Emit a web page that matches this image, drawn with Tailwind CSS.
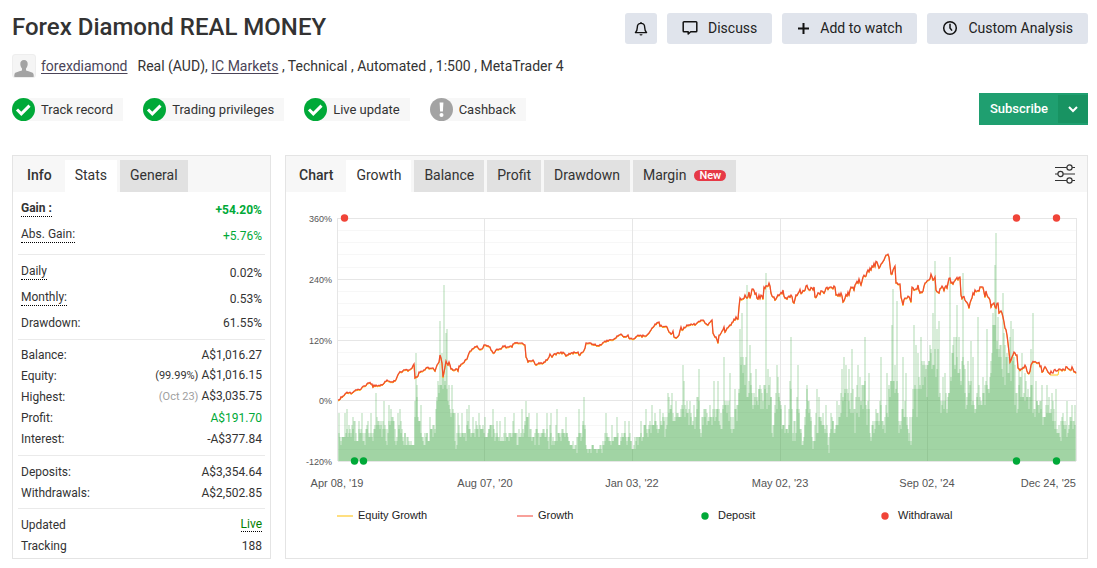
<!DOCTYPE html>
<html lang="en">
<head>
  <meta charset="UTF-8">
  <meta name="viewport" content="width=device-width, initial-scale=1">
  <title>Forex Diamond REAL MONEY</title>
  <script src="https://cdn.jsdelivr.net/npm/@tailwindcss/browser@4"></script>
</head>
<body class="bg-white font-[Roboto,sans-serif] text-[#333]">
  <main class="pl-3 pr-[9px] pt-3">

    <!-- Title and actions -->
    <div class="flex items-start justify-between">
      <h1 class="text-2xl leading-[30px] font-medium">Forex Diamond REAL MONEY</h1>
      <div class="flex gap-[10px] pt-px text-sm text-[#222]">
        <button aria-label="Notifications" class="flex h-[31px] w-8 items-center justify-center rounded-[3px] bg-[#e0e4ec]">
          <svg class="h-4 w-4" viewBox="0 0 16 16" fill="none" stroke="#111" stroke-width="1.4" stroke-linejoin="round"><path d="M8 2.4c-2.4 0-3.7 1.8-3.7 4 0 3-.8 4-1.9 5.200h11.200c-1.100-1.200-1.900-2.200-1.900-5.200 0-2.200-1.300-4-3.700-4zM8 1v1.400"/><path d="M6.500 13.200h3a1.500 1.300 0 0 1-3 0z" fill="#111" stroke="none"/></svg>
        </button>
        <button class="flex h-[31px] items-center gap-[10px] rounded-[3px] bg-[#e0e4ec] px-[15px] pb-px">
          <svg class="h-4 w-4" viewBox="0 0 16 16" fill="none" stroke="#111" stroke-width="1.500" stroke-linejoin="round"><path d="M2 1.700h12a.8.8 0 0 1 .8.8v8.400a.8.8 0 0 1-.8.8H8.700L6.200 14v-2.300H2a.8.8 0 0 1-.8-.8V2.500a.8.8 0 0 1 .8-.8z"/></svg>
          Discuss
        </button>
        <button class="flex h-[31px] items-center gap-[10px] rounded-[3px] bg-[#e0e4ec] px-[15px] pb-px">
          <svg class="h-[13px] w-[13px]" viewBox="0 0 13 13" stroke="#111" stroke-width="2"><path d="M6.500 1v11M1 6.500h11"/></svg>
          Add to watch
        </button>
        <button class="flex h-[31px] items-center gap-[10px] rounded-[3px] bg-[#e0e4ec] px-[15px] pb-px">
          <svg class="h-4 w-4" viewBox="0 0 16 16" fill="none" stroke="#111" stroke-width="1.500"><circle cx="8" cy="8" r="6.300"/><path d="M8 3.800V8l2 2.600"/></svg>
          Custom Analysis
        </button>
      </div>
    </div>

    <!-- Account line -->
    <div class="mt-[10px] flex items-center text-sm leading-6">
      <svg class="h-6 w-6 rounded-[3px] border border-[#eee] bg-[#f5f5f5]" viewBox="0 0 22 22"><path fill="#a3a3a3" d="M11 5c2.500 0 3.900 1.700 3.700 4.300-.1 1.900-.9 3.300-1.700 4.100v1.900c1 1.200 7 1.500 7.500 3.700.2.800.3 2 .3 3H1.200c0-1 .1-2.200.3-3 .5-2.200 6.500-2.500 7.500-3.700v-1.900c-.8-.8-1.600-2.200-1.700-4.100C7.100 6.700 8.500 5 11 5z"/></svg>
      <a href="#" class="ml-[5px] text-[#4a4458] underline underline-offset-2">forexdiamond</a>
      <p class="ml-[10px]">Real (AUD), <a href="#" class="text-[#4a4458] underline underline-offset-2">IC Markets</a> , Technical , Automated , 1:500 , MetaTrader 4</p>
    </div>

    <!-- Verification badges -->
    <div class="mt-[15px] flex items-center justify-between">
      <ul class="flex gap-5 text-[13px] leading-[23px]">
        <li class="flex items-center gap-[6px] rounded-l-full bg-[#f7f7f7] pr-[10px]"><svg class="h-[23px] w-[23px]" viewBox="0 0 23 23"><circle cx="11.500" cy="11.500" r="11.500" fill="#00a938"/><path d="M5 11.500l4.300 4.300L17.500 7.600" fill="none" stroke="#fff" stroke-width="3"/></svg>Track record</li>
        <li class="flex items-center gap-[6px] rounded-l-full bg-[#f7f7f7] pr-[10px]"><svg class="h-[23px] w-[23px]" viewBox="0 0 23 23"><circle cx="11.500" cy="11.500" r="11.500" fill="#00a938"/><path d="M5 11.500l4.300 4.300L17.500 7.600" fill="none" stroke="#fff" stroke-width="3"/></svg>Trading privileges</li>
        <li class="flex items-center gap-[6px] rounded-l-full bg-[#f7f7f7] pr-[10px]"><svg class="h-[23px] w-[23px]" viewBox="0 0 23 23"><circle cx="11.500" cy="11.500" r="11.500" fill="#00a938"/><path d="M5 11.500l4.300 4.300L17.500 7.600" fill="none" stroke="#fff" stroke-width="3"/></svg>Live update</li>
        <li class="flex items-center gap-[6px] rounded-l-full bg-[#f7f7f7] pr-[10px]"><svg class="h-[23px] w-[23px]" viewBox="0 0 23 23"><circle cx="11.500" cy="11.500" r="11.500" fill="#a3a3a3"/><path d="M9.600 4.500h3.800l-.5 9h-2.800z" fill="#fff"/><circle cx="11.500" cy="17" r="2" fill="#fff"/></svg>Cashback</li>
      </ul>
      <div class="flex h-8 bg-[#1f9f70] text-white">
        <button class="pl-[11px] pr-[10px] text-[13px] font-medium">Subscribe</button>
        <button aria-label="More subscribe options" class="my-[2px] flex w-[30px] items-center justify-center bg-[#189362]">
          <svg class="h-[10px] w-[10px]" viewBox="0 0 10 10" fill="none" stroke="#fff" stroke-width="2"><path d="M1 3l4 4 4-4"/></svg>
        </button>
      </div>
    </div>

    <div class="mt-[30px] flex gap-[14px]">

      <!-- Stats card -->
      <section class="w-[259px] shrink-0 border border-[#e4e4e4]">
        <div class="flex h-9 items-end bg-[#f7f7f7] text-sm">
          <h2 class="pl-[14px] pr-[13px] pb-[2px] leading-[30px] font-medium">Info</h2>
          <button class="h-8 bg-white px-[10px] pb-[2px]">Stats</button>
          <button class="ml-[3px] h-8 bg-[#e1e1e1] px-[10px] pb-[2px]">General</button>
        </div>
        <div class="mx-[5px] text-xs">
          <div class="border-b border-[#eaeaea] px-[3px] py-[5px]">
            <table class="w-full">
              <tr class="h-[26px] font-bold"><th class="text-left align-top leading-3"><span class="inline-block border-b border-dotted border-black pt-1 pb-px leading-[14px]">Gain :</span></th><td class="text-right text-[#00a938]">+54.20%</td></tr>
              <tr class="h-[26px]"><th class="text-left align-top leading-3 font-normal"><span class="inline-block border-b border-dotted border-black pt-1 pb-px leading-[14px]">Abs. Gain:</span></th><td class="text-right text-[#00a938]">+5.76%</td></tr>
            </table>
          </div>
          <div class="border-b border-[#eaeaea] px-[3px] py-[5px]">
            <table class="w-full">
              <tr class="h-[26px]"><th class="text-left align-top leading-3 font-normal"><span class="inline-block border-b border-dotted border-black pt-1 pb-px leading-[14px]">Daily</span></th><td class="text-right">0.02%</td></tr>
              <tr class="h-[26px]"><th class="text-left align-top leading-3 font-normal"><span class="inline-block border-b border-dotted border-black pt-1 pb-px leading-[14px]">Monthly:</span></th><td class="text-right">0.53%</td></tr>
              <tr class="h-[22px]"><th class="text-left font-normal">Drawdown:</th><td class="text-right">61.55%</td></tr>
            </table>
          </div>
          <div class="border-b border-[#eaeaea] px-[3px] pt-1 pb-[6px]">
            <table class="w-full">
              <tr class="h-[21px]"><th class="text-left font-normal">Balance:</th><td class="text-right">A$1,016.27</td></tr>
              <tr class="h-[21px]"><th class="text-left font-normal">Equity:</th><td class="text-right"><span class="text-[11px]">(99.99%)</span> A$1,016.15</td></tr>
              <tr class="h-[21px]"><th class="text-left font-normal">Highest:</th><td class="text-right"><span class="text-[11px] text-[#a0a0a0]">(Oct 23)</span> A$3,035.75</td></tr>
              <tr class="h-[21px]"><th class="text-left font-normal">Profit:</th><td class="text-right text-[#00a938]">A$191.70</td></tr>
              <tr class="h-[21px]"><th class="text-left font-normal">Interest:</th><td class="text-right">-A$377.84</td></tr>
            </table>
          </div>
          <div class="border-b border-[#eaeaea] px-[3px] py-[5px]">
            <table class="w-full">
              <tr class="h-[21px]"><th class="text-left font-normal">Deposits:</th><td class="text-right">A$3,354.64</td></tr>
              <tr class="h-[21px]"><th class="text-left font-normal">Withdrawals:</th><td class="text-right">A$2,502.85</td></tr>
            </table>
          </div>
          <div class="px-[3px] pt-[5px]">
            <table class="w-full">
              <tr class="h-[21px]"><th class="text-left font-normal">Updated</th><td class="text-right leading-3"><span class="inline-block border-b border-dotted border-black leading-[14px] text-[#008000]">Live</span></td></tr>
              <tr class="h-[21px]"><th class="text-left font-normal">Tracking</th><td class="text-right">188</td></tr>
            </table>
          </div>
        </div>
      </section>

      <!-- Chart card -->
      <section class="min-w-0 flex-1 border border-[#e4e4e4]">
        <div class="flex h-9 items-end bg-[#f7f7f7] text-sm">
          <h2 class="pl-[13px] pr-[13px] pb-[2px] leading-[30px] font-medium">Chart</h2>
          <div class="flex gap-[3px]">
            <button class="h-8 bg-white px-[10px] pb-[2px]">Growth</button>
            <button class="h-8 bg-[#e1e1e1] px-[10px] pb-[2px]">Balance</button>
            <button class="h-8 bg-[#e1e1e1] px-[10px] pb-[2px]">Profit</button>
            <button class="h-8 bg-[#e1e1e1] px-[10px] pb-[2px]">Drawdown</button>
            <button class="flex h-8 items-center bg-[#e1e1e1] px-[10px] pb-[2px]">Margin <span class="ml-2 rounded-full bg-[#e63946] px-[5px] text-[11px] leading-[11px] font-medium text-white">New</span></button>
          </div>
          <button aria-label="Chart settings" class="mr-3 mb-2 ml-auto">
            <svg class="h-5 w-5" viewBox="0 0 20 20" fill="#f7f7f7" stroke="#333" stroke-width="1.200"><path d="M0 3.500h20M0 10h20M0 16.500h20"/><circle cx="14.500" cy="3.500" r="2.600"/><circle cx="5.500" cy="10" r="2.600"/><circle cx="14.500" cy="16.500" r="2.600"/></svg>
          </button>
        </div>
        <svg class="block h-auto w-full" viewBox="0 0 801 366">
          <g transform="translate(52 26)">
            <g id="grid" shape-rendering="crispEdges"></g>
            <g id="bars" fill="#4caf50" fill-opacity=".22" shape-rendering="crispEdges"></g>
            <path id="equity" fill="none" stroke="#ffc61a" stroke-width="1"/>
            <path id="growth" fill="none" stroke="#f04e2e" stroke-width="1.300"/>
            <g fill="#f04438"><circle cx="6.500" cy="0" r="3.700"/><circle cx="678.500" cy="0" r="3.700"/><circle cx="718.500" cy="0" r="3.700"/></g>
            <g fill="#00a938"><circle cx="16.500" cy="243" r="3.700"/><circle cx="25.500" cy="243" r="3.700"/><circle cx="678.500" cy="243" r="3.700"/><circle cx="718.500" cy="243" r="3.700"/></g>
          </g>
          <g class="font-['Liberation_Sans',sans-serif] text-[9px]" fill="#555" text-anchor="end">
            <text x="46" y="30">360%</text>
            <text x="46" y="91">240%</text>
            <text x="46" y="152">120%</text>
            <text x="46" y="212">0%</text>
            <text x="46" y="273">-120%</text>
          </g>
          <g class="font-['Liberation_Sans',sans-serif] text-[11px]" fill="#555" text-anchor="middle">
            <text x="51" y="295">Apr 08, '19</text>
            <text x="199" y="295">Aug 07, '20</text>
            <text x="346" y="295">Jan 03, '22</text>
            <text x="494" y="295">May 02, '23</text>
            <text x="641" y="295">Sep 02, '24</text>
            <text x="790" y="295" text-anchor="end">Dec 24, '25</text>
          </g>
          <g class="font-['Liberation_Sans',sans-serif] text-[11px]" fill="#222">
            <path d="M51 324h16" stroke="#ffdf80" stroke-width="2"/><text x="72" y="327">Equity Growth</text>
            <path d="M231 324h16" stroke="#f8a09a" stroke-width="2"/><text x="252" y="327">Growth</text>
            <circle cx="419" cy="324" r="3.700" fill="#00a938"/><text x="432" y="327">Deposit</text>
            <circle cx="599" cy="324" r="3.700" fill="#f04438"/><text x="612" y="327">Withdrawal</text>
          </g>
        </svg>
      </section>
    </div>
  </main>

  <script>
    // Growth curve, plot units (738 x 243, y down)
    const growth = [
      [0,182],[5,178],[8,175],[14,175],[19,172],[23,171],[26,168],[31,165],[34,166],[35,169],[36,167],[39,168],[44,167],[49,162],[53,164],[57,163],[59,159],[61,155],[63,154],[67,152],[70,153],[74,150],[76,146],[77,160],[80,158],[81,154],[85,153],[88,150],[95,150],[97,153],[99,147],[101,144],[102,137],[104,145],[105,159],[107,149],[108,143],[110,147],[111,144],[113,151],[116,152],[119,151],[120,153],[121,148],[125,145],[129,141],[131,135],[133,133],[136,130],[139,128],[141,131],[144,131],[146,127],[152,129],[154,133],[156,135],[159,131],[163,131],[165,128],[170,129],[174,129],[175,126],[178,125],[184,125],[187,127],[188,139],[190,144],[193,143],[195,142],[198,147],[200,146],[207,144],[211,139],[212,136],[214,139],[216,136],
      [222,135],[226,135],[228,138],[233,135],[240,134],[241,137],[245,134],[247,130],[248,125],[255,126],[261,128],[266,124],[271,122],[276,121],[279,118],[283,116],[286,119],[290,117],[291,120],[294,121],[299,118],[307,118],[310,116],[314,110],[317,106],[321,104],[322,108],[329,109],[331,114],[333,116],[335,113],[336,119],[338,120],[341,117],[343,109],[344,112],[349,107],[353,106],[358,106],[360,104],[365,102],[367,105],[370,107],[373,103],[374,102],[375,115],[377,119],[378,119],[380,125],[381,117],[383,115],[386,109],[387,114],[389,110],[392,107],[395,104],[397,102],[398,99],[400,101],[401,89],[402,80],[405,81],[407,77],[409,80],[411,74],[412,80],[414,71],[418,75],[420,81],[423,77],[425,81],[426,69],[429,68],[431,65],[432,68],[433,75],[435,79],[438,81],[442,76],[445,72],[447,80],[451,78],[453,77],[455,84],[457,81],[458,77],[461,74],[466,73],[468,68],[472,72],[476,69],[477,79],[481,75],[484,73],
      [487,73],[493,69],[497,69],[498,77],[502,78],[503,75],[505,84],[507,80],[509,78],[510,74],[511,77],[513,69],[516,72],[517,67],[521,61],[523,67],[525,59],[528,58],[529,54],[535,49],[539,44],[541,50],[543,46],[546,42],[548,37],[551,39],[553,56],[555,52],[557,48],[558,65],[562,66],[563,79],[565,87],[567,80],[572,81],[573,84],[574,69],[579,71],[580,67],[582,75],[585,73],[587,65],[591,62],[593,56],[595,62],[597,59],[598,72],[600,74],[603,70],[609,70],[610,65],[612,60],[613,65],[615,66],[618,61],[622,59],[623,77],[627,82],[631,90],[633,82],[635,75],[639,73],[644,69],[646,74],[647,79],[648,73],[650,79],[652,82],[653,89],[656,85],[658,90],[660,85],[661,95],[664,95],[665,99],[667,110],[669,117],[670,125],[671,134],[672,144],[674,139],[677,135],[679,137],[680,150],[684,151],[688,149],[689,153],[692,153],[693,147],[696,144],[699,145],[703,148],[704,154],[708,150],[711,155],[714,155],[718,153],[721,151],[725,151],[729,149],[731,151],[735,151],[738,155]
    ];

    // Volume range over time: [x, low, high]
    const range = [
      [0,8,40],[40,12,46],[50,16,46],[62,16,44],[70,5,27],[80,12,42],[90,5,30],[96,16,50],[99,60,85],[106,65,90],[112,30,66],[117,12,44],[124,12,38],[130,18,52],[145,10,44],[155,12,42],[165,5,30],[175,10,44],[182,8,34],[188,14,50],[200,6,32],[215,10,44],[235,8,28],[243,12,34],[250,4,18],[260,4,16],[265,8,32],[280,8,30],[290,10,44],[296,4,28],[310,6,44],[325,10,50],[330,30,70],[340,20,56],[345,40,80],[352,16,58],[365,18,56],[375,20,64],[398,20,66],[402,70,120],[406,45,100],[414,35,80],[427,40,95],[434,20,74],[440,40,90],[446,12,62],[458,12,60],[464,6,32],[468,25,76],[474,10,54],[490,8,54],[497,8,44],[503,30,92],[515,15,78],[526,30,86],[530,6,34],[540,15,60],[550,15,85],[556,30,110],[560,12,66],[572,12,76],[580,35,110],[594,60,130],[600,45,125],[606,15,84],[614,55,130],[625,50,125],[630,20,90],[640,35,112],[648,40,90],[655,90,150],[662,65,125],[675,55,115],[686,30,90],[692,25,70],[705,25,66],[715,25,68],[720,15,54],[738,20,56]
    ];

    // Tall bars: [x, height]
    const peaks = [
      [0,49],[6,48],[8,52],[14,45],[20,41],[23,49],[32,49],[37,69],[45,61],[50,57],[52,50],[59,48],[61,52],[77,109],[79,45],[82,57],[91,45],[97,50],[99,80],[101,138],[103,109],[105,174],[107,126],[108,130],[110,77],[113,77],[114,52],[119,49],[123,48],[128,50],[130,57],[134,44],[140,49],[146,45],[154,53],[158,41],[161,41],[166,45],[175,49],[183,53],[187,61],[190,49],[198,49],[208,49],[212,49],[218,53],
      [227,45],[240,53],[245,65],[267,49],[273,36],[278,45],[286,41],[290,41],[302,41],[307,52],[313,57],[316,49],[321,53],[329,69],[333,69],[337,60],[344,97],[345,81],[351,61],[358,65],[360,93],[367,53],[375,81],[379,81],[385,105],[391,89],[396,73],[401,130],[403,146],[407,105],[408,174],[411,117],[412,89],[417,93],[420,73],[425,77],[427,186],[429,93],[431,85],[438,97],[439,85],[446,57],[452,122],[459,97],[468,77],[478,73],[480,65],
      [487,57],[492,49],[498,61],[503,93],[505,105],[507,97],[510,93],[513,113],[519,97],[521,85],[526,122],[530,89],[537,53],[542,105],[548,89],[553,134],[554,170],[558,158],[564,105],[567,89],[575,134],[577,117],[579,109],[582,122],[585,101],[587,93],[591,117],[594,146],[596,198],[598,130],[600,138],[604,85],[606,89],[611,203],[613,109],[618,154],[620,122],[624,186],[629,101],[632,121],[634,105],[639,142],[648,130],[652,85],[654,146],[656,194],[657,227],[659,142],[664,166],[665,126],[671,122],[672,138],[674,130],[680,93],[683,108],[686,89],[692,113],[694,146],[697,81],[703,77],[708,77],[713,69],[717,73],[728,61],[733,57],[736,57]
    ];

    // Small seeded generator so every load draws the same chart
    let seed = 7;
    function rnd() {
      seed = (seed * 16807) % 2147483647;
      return seed / 2147483647;
    }

    function drawGrid() {
      let str = "";
      for (let i = 0; i <= 20; i++) {
        let y = Math.round(i * 12.15);
        if (i % 5) str += `<rect x="0" y="${y}" width="738" height="1" fill="#f7f7f7"/>`;
      }
      for (let i = 0; i <= 20; i += 5) {
        str += `<rect x="0" y="${Math.round(i * 12.15)}" width="738" height="1" fill="#e6e6e6"/>`;
      }
      for (const x of [-1, 146, 294, 442, 589, 738]) {
        str += `<rect x="${x}" y="0" width="1" height="243" fill="#e6e6e6"/>`;
      }
      document.getElementById("grid").innerHTML = str;
    }

    function drawBars() {
      let heights = [];
      let k = 0;
      let level = 0.5;
      for (let i = 0; i < 1106; i++) {
        let x = Math.floor(i * 2 / 3);
        while (k < range.length - 2 && range[k + 1][0] <= x) k++;
        let a = range[k], b = range[k + 1];
        let t = (x - a[0]) / (b[0] - a[0]);
        let low = a[1] + (b[1] - a[1]) * t;
        let high = a[2] + (b[2] - a[2]) * t;
        // short busy and quiet spells
        if (i % 5 === 0) level = rnd();
        let v = level * 0.5 + rnd() * 0.5;
        heights.push(low + (high - low) * v);
      }
      // lift the bars next to a peak
      for (const [x, h] of peaks) {
        let c = Math.ceil(x * 1.5);
        for (let d = -2; d <= 2; d++) {
          if (heights[c + d] === undefined) continue;
          let side = Math.min(h, 120) * (0.8 - Math.abs(d) * 0.1) * (0.5 + rnd() * 0.5);
          heights[c + d] = Math.max(heights[c + d], d === 0 ? h : side);
        }
      }
      let str = "";
      heights.forEach(function (h, i) {
        h = Math.max(4, Math.round(h / 4) * 4);
        str += `<rect x="${Math.floor(i * 2 / 3)}" y="${243 - h}" width="2" height="${h}"/>`;
      });
      document.getElementById("bars").innerHTML = str;
    }

    function drawLines() {
      let line = "M0 182";
      let eq = "M0 183";
      for (let i = 1; i < growth.length; i++) {
        let [x0, y0] = growth[i - 1];
        let [x1, y1] = growth[i];
        for (let x = x0 + 1; x <= x1; x++) {
          let noise = x > 395 ? 5 : 2;
          let y = y0 + (y1 - y0) * (x - x0) / (x1 - x0);
          if (x < x1) y += (rnd() - 0.5) * noise;
          line += `L${x} ${y.toFixed(1)}`;
          eq += `L${x} ${(x > 712 && x < 721 ? 157 : y + 0.8).toFixed(1)}`;
        }
      }
      document.getElementById("growth").setAttribute("d", line);
      document.getElementById("equity").setAttribute("d", eq);
    }

    drawGrid();
    drawBars();
    drawLines();
  </script>
</body>
</html>
